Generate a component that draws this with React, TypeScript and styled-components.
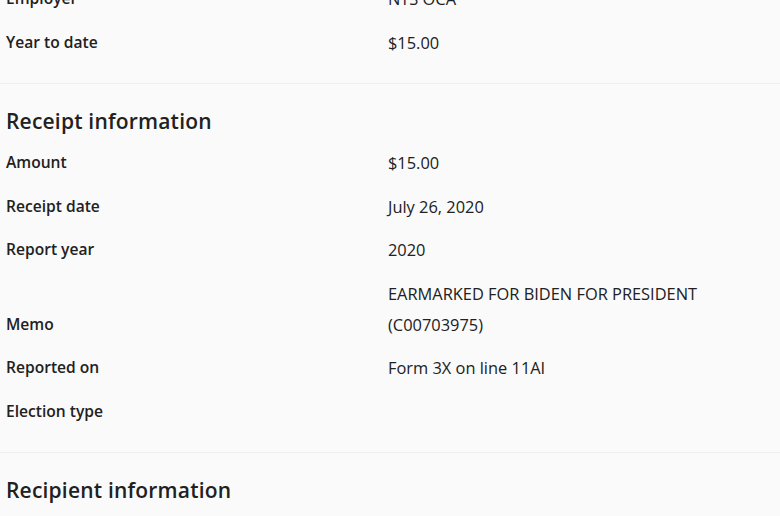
import React from "react";
import styled, { createGlobalStyle } from "styled-components";

const Global = createGlobalStyle`
  html, body { margin: 0; padding: 0; background: #fafafa; }
  body { font-family: "Open Sans", "Liberation Sans", sans-serif; color: #212121; }
`;

const Page = styled.div`
  width: 780px;
  height: 516px;
  overflow: hidden;
  background: #fafafa;
  box-sizing: border-box;
`;

const Inner = styled.div`
  margin-top: -23px;
`;

const Section = styled.section`
  display: flex;
  flex-direction: column;
  padding: 0 6px 19px;
  border-bottom: 1px solid #efefef;
  & + & { padding-top: 22px; }
`;

const Heading = styled.h2`
  margin: 0 0 5px;
  font-size: 21px;
  line-height: 30px;
  font-weight: 600;
  letter-spacing: 0.2px;
`;

const Row = styled.div`
  display: grid;
  grid-template-columns: 382px 1fr;
  align-items: end;
  padding: 6.25px 0;
  font-size: 16px;
  line-height: 31px;
`;

const Label = styled.div`
  font-weight: 600;
  font-size: 15.6px;
`;

const Value = styled.div`
  font-weight: 400;
  font-size: 16.4px;
`;

type Item = [string, React.ReactNode];

const Fields = ({ items }: { items: Item[] }) => (
  <>
    {items.map(([l, v]) => (
      <Row key={l}>
        <Label>{l}</Label>
        <Value>{v}</Value>
      </Row>
    ))}
  </>
);

export default function App() {
  return (
    <>
      <Global />
      <Page>
        <Inner>
          <Section>
            <Fields
              items={[
                ["Employer", "NTS OCA"],
                ["Year to date", "$15.00"],
              ]}
            />
          </Section>
          <Section>
            <Heading>Receipt information</Heading>
            <Fields
              items={[
                ["Amount", "$15.00"],
                ["Receipt date", "July 26, 2020"],
                ["Report year", "2020"],
                [
                  "Memo",
                  <>
                    EARMARKED FOR BIDEN FOR PRESIDENT
                    <br />
                    (C00703975)
                  </>,
                ],
                ["Reported on", "Form 3X on line 11AI"],
                ["Election type", ""],
              ]}
            />
          </Section>
          <Section>
            <Heading>Recipient information</Heading>
          </Section>
        </Inner>
      </Page>
    </>
  );
}
